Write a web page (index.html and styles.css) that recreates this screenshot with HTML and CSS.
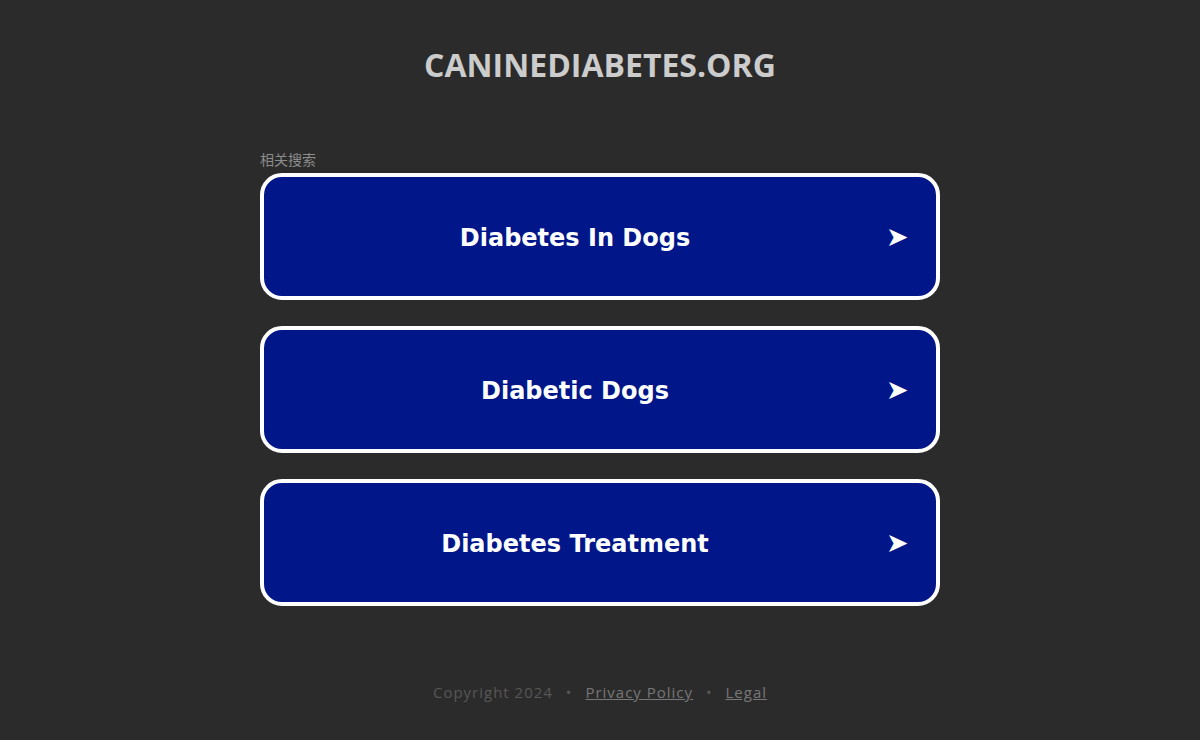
FILE: index.html
```html
<!DOCTYPE html>
<html lang="en">
<head>
  <meta charset="UTF-8">
  <meta name="viewport" content="width=device-width, initial-scale=1">
  <title>caninediabetes.org</title>
  <link rel="stylesheet" href="styles.css">
</head>
<body>

  <div class="header">caninediabetes.org</div>

  <div class="wrap">
    <div class="label">相关搜索</div>

    <a class="link-box" href="#">
      <span class="link-text">Diabetes In Dogs</span>
      <span class="arrow">&#10148;</span>
    </a>
    <a class="link-box" href="#">
      <span class="link-text">Diabetic Dogs</span>
      <span class="arrow">&#10148;</span>
    </a>
    <a class="link-box" href="#">
      <span class="link-text">Diabetes Treatment</span>
      <span class="arrow">&#10148;</span>
    </a>
  </div>

  <div class="footer">
    <span>Copyright 2024</span>
    <span class="dot">&bull;</span>
    <a href="#">Privacy Policy</a>
    <span class="dot">&bull;</span>
    <a href="#">Legal</a>
  </div>

</body>
</html>
```

FILE: styles.css
```css
body {
  margin: 0;
  background-color: #2b2b2b;
  font-family: "Open Sans", "Noto Sans CJK SC", sans-serif;
}
.header {
  text-align: center;
  text-transform: uppercase;
  font-size: 32px;
  font-weight: bold;
  color: #cccccc;
  padding-top: 44px;
  line-height: 42px;
}
.wrap {
  width: 680px;
  margin: 64px auto 0;
}
.label {
  font-family: "Noto Sans CJK SC", sans-serif;
  font-size: 14px;
  color: #8c8c8c;
  line-height: 18px;
  margin-bottom: 5px;
}
.link-box {
  display: flex;
  align-items: center;
  height: 119px;
  margin-bottom: 26px;
  background-color: #001689;
  border: 4px solid #ffffff;
  border-radius: 22px;
  color: #ffffff;
  text-decoration: none;
}
.link-text {
  flex: 1;
  text-align: center;
  font-family: "DejaVu Sans", Verdana, sans-serif;
  font-size: 24px;
  font-weight: bold;
  padding-top: 2px;
}
.arrow {
  width: 22px;
  font-family: "DejaVu Sans", sans-serif;
  font-size: 27px;
  margin-right: 28px;
}
.footer {
  text-align: center;
  margin-top: 76px;
  font-size: 15px;
  letter-spacing: 1px;
  color: #575757;
}
.footer a {
  color: #777777;
}
.dot {
  margin: 0 8px;
}
```
